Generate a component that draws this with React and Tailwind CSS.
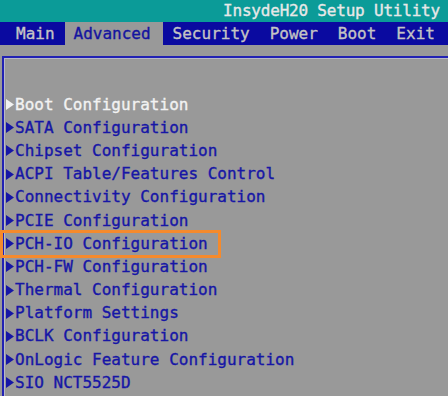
import React from "react";

const items = [
  "Boot Configuration",
  "SATA Configuration",
  "Chipset Configuration",
  "ACPI Table/Features Control",
  "Connectivity Configuration",
  "PCIE Configuration",
  "PCH-IO Configuration",
  "PCH-FW Configuration",
  "Thermal Configuration",
  "Platform Settings",
  "BCLK Configuration",
  "OnLogic Feature Configuration",
  "SIO NCT5525D",
];

const tabs = ["Main", "Advanced", "Security", "Power", "Boot", "Exit"];

function Tri({ color }) {
  return (
    <svg width="9" height="11" viewBox="0 0 9 11" className="shrink-0">
      <polygon points="0,0 8,5.5 0,11" fill={color} />
    </svg>
  );
}

export default function App() {
  return (
    <div
      className="w-[448px] h-[396px] overflow-hidden bg-[#999999] flex flex-col [-webkit-text-stroke:0.35px]"
      style={{ fontFamily: '"DejaVu Sans Mono", "Liberation Mono", monospace' }}
    >
      <div className="h-[22px] bg-[#0b9b98] flex items-center justify-end pr-[8px] text-[16px] text-[#e8e8e8] tracking-[-0.2px]">
        InsydeH20 Setup Utility
      </div>
      <div className="h-[23px] bg-[#0a0aa0] flex items-center pl-[6px] text-[16px]">
        {tabs.map((t) => (
          <div
            key={t}
            className={
              t === "Advanced"
                ? "h-full flex items-center pl-[9px] pr-[12px] bg-[#999999] text-[#1414a0]"
                : "h-full flex items-center px-[10px] text-[#c4c4c4]"
            }
          >
            {t}
          </div>
        ))}
      </div>
      <div className="h-[11px]" />
      <div className="flex-1 ml-[2px] border-l-2 border-t-2 border-[#2222b4]">
        <div className="h-full border-l border-t border-[#b8b8c8] pt-[34px]">
          {items.map((it, i) => {
            const selected = i === 0;
            const boxed = it === "PCH-IO Configuration";
            const color = selected ? "#f2f2f2" : "#1616a6";
            return (
              <div
                key={it}
                className="relative h-[23.2px] flex items-center text-[16px] pl-[1px]"
                style={{ color }}
              >
                {boxed && (
                  <span className="absolute -left-[5px] -top-[2px] -bottom-[3px] w-[221px] border-[3px] border-[#f58a2c] pointer-events-none" />
                )}
                <Tri color={color} />
                <span>{it}</span>
              </div>
            );
          })}
        </div>
      </div>
    </div>
  );
}
